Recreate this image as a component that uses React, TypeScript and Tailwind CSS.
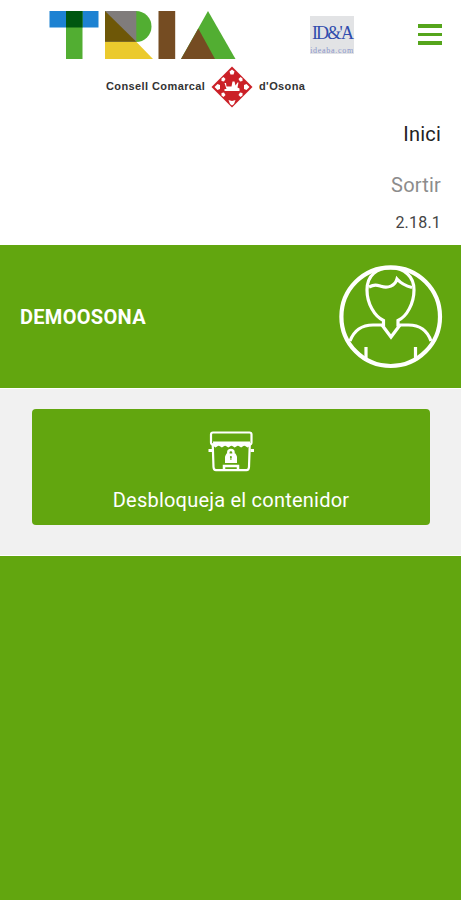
import type { ReactNode } from "react"

const navItems = [
  { label: "Inici", className: "h-[51px] text-[20px] tracking-[0.2px] text-[#222]" },
  { label: "Sortir", className: "h-[51px] text-[20px] tracking-[0.2px] text-[#8c8c8c]" },
  { label: "2.18.1", className: "h-[25px] text-[16px] tracking-[0.2px] text-[#444]" },
]

function TriaLogo() {
  return (
    <svg width="188" height="50" viewBox="48 10 188 50">
      <rect x="49.5" y="11" width="49" height="16.5" fill="#1d82d2" />
      <rect x="66" y="11" width="16.5" height="48" fill="#52ae32" />
      <rect x="66" y="11" width="16.5" height="16.5" fill="#005710" />
      <path d="M136 11a15.5 15.5 0 0 1 0 31z" fill="#52ae32" />
      <path d="M105 41.5h31L153 59h-48z" fill="#ebca2d" />
      <rect x="105" y="11" width="31.3" height="30.7" fill="#807c7b" />
      <path d="M105 11L136.3 41.7H105z" fill="#6e5707" />
      <rect x="158.5" y="11" width="16.7" height="48" fill="#754c22" />
      <path d="M208 11L235.5 59H181z" fill="#52ae32" />
      <path d="M198.3 28.5L215 59H181z" fill="#754c22" />
    </svg>
  )
}

function Shield() {
  return (
    <svg width="42" height="42" viewBox="0 0 42 42">
      <path d="M21 .5L41.5 21 21 41.5.5 21z" fill="#cb2027" />
      <g fill="#fff">
        <path d="M18.5 5.5l2.5-2 2.5 2-1 3h-3z" />
        <path d="M17.5 34l3.5 1 3.5-1-1.500 4-2 1.500-2-1.500z" />
        <path d="M3.5 21l3-3 2.500 1v4l-2.500 1z" />
        <path d="M38.5 21l-3-3-2.500 1v4l2.500 1z" />
        <path d="M10.5 12.5l2-1.500 2 2-1.500 2.500-2.500-.5z" />
        <path d="M31.5 12.5l-2-1.500-2 2 1.500 2.500 2.500-.5z" />
        <path d="M10.5 29.5l2 1.500 2-2-1.500-2.500-2.500.5z" />
        <path d="M31.5 29.5l-2 1.500-2-2 1.500-2.500 2.500.5z" />
        <path d="M13.500 17h1.500l.5 3.500h5l1-5h2l1 4 2-3h1l-1 5 2 1v2.500h-15v-2h2z" />
      </g>
    </svg>
  )
}

function Avatar() {
  return (
    <svg width="104" height="104" viewBox="339 265 104 104" fill="none" stroke="#fff" strokeWidth="3.2">
      <circle cx="390.7" cy="316.7" r="49.3" strokeWidth="4.2" />
      <path d="M350 341c4-10.500 12-16 23-16h10.500v-4.500c-9-4-16.500-17-16.500-30.500 0-15 10-22 23.500-22s23.500 8 23.500 22c0 13-7 26.500-16 30.500v4.500h10.500c11 0 19 6 22.500 16" />
      <path d="M382 325l9 12 9-12" />
      <path d="M369 287c6-3 8-2 12-.7 7 2.200 14-.3 16-7.300 4 4.500 9 7 15 8.500" />
      <path d="M366 347v14M415.500 347v14" />
    </svg>
  )
}

function ContainerIcon() {
  return (
    <svg width="46" height="42" viewBox="208 430 46 42" fill="none" stroke="#fff" strokeWidth="2.2">
      <rect x="211" y="432.5" width="40.5" height="12" rx="2" />
      <path d="M212.700 443.500l.8 23.500c.1 2 1 3.200 2.500 3.200h30.500c1.500 0 2.400-1.200 2.500-3.200l.8-23.500" />
      <path d="M208.500 450.500h4M250.500 450.500h4" strokeWidth="3" />
      <path d="M213 441.500h37v4.500l-2.500 1.500-3.200-2-3.200 2-3.200-2-3.200 2-3.200-2-3.200 2-3.200-2-3.200 2-3.200-2-3.200 2-2.200-1.500z" fill="#fff" stroke="none" />
      <path d="M224 470v-4h14v4" strokeWidth="2.500" />
      <path d="M228.300 454v-1.500c0-1.700 1-2.500 2.600-2.500s2.600.8 2.600 2.500v1.500" strokeWidth="2.500" />
      <path d="M226.500 453.500h9l1.500 3v6.500h-12v-6.500z" fill="#fff" stroke="none" />
      <circle cx="230.9" cy="457" r="1" fill="#62a60f" stroke="none" />
      <path d="M230.9 457v3" stroke="#62a60f" strokeWidth="1" />
    </svg>
  )
}

function ActionCard({ icon, label }: { icon: ReactNode; label: string }) {
  return (
    <button className="flex h-[116px] w-full flex-col items-center rounded-[4px] bg-[#62a60f] pt-[21px] text-white">
      {icon}
      <span className="mt-[13px] text-[20px] leading-[30px] tracking-[0.22px]">{label}</span>
    </button>
  )
}

export default function App() {
  return (
    <div className="flex h-[900px] w-[461px] flex-col overflow-hidden bg-[#62a60f] font-['Roboto',sans-serif]">
      <div className="h-[245px] shrink-0 bg-white">
        <header className="flex h-[108px] items-start">
          <div className="ml-[48px] w-[262px] shrink-0 pt-[10px]">
            <TriaLogo />
            <div className="mt-[6px] flex h-[42px] items-center pl-[58px] font-['Liberation_Sans',sans-serif] text-[11px] font-bold whitespace-nowrap text-[#333]">
              <span className="w-[105px] pb-[2px] tracking-[0.4px]">Consell Comarcal</span>
              <Shield />
              <span className="ml-[6px] pb-[2px] tracking-[0.4px]">d'Osona</span>
            </div>
          </div>
          <div className="mt-[16px] flex h-[38px] w-[44px] flex-col items-center bg-[#e2e3e5] whitespace-nowrap">
            <span className="mt-[6px] font-['Liberation_Serif',serif] text-[18px] leading-[22px] tracking-[-1.8px] text-[#304cad]">ID&amp;'A</span>
            <span className="mt-[2px] font-['Liberation_Serif',serif] text-[8px] leading-[9px] tracking-[0.7px] text-[#8b96cb]">ideaba.com</span>
          </div>
          <button className="mt-[24px] ml-[64px] flex flex-col gap-[5px]" aria-label="Menu">
            <span className="h-[3.5px] w-[24px] bg-[#55a51c]" />
            <span className="h-[3.5px] w-[24px] bg-[#55a51c]" />
            <span className="h-[3.5px] w-[24px] bg-[#55a51c]" />
          </button>
        </header>
        <nav className="flex flex-col pr-[20px] text-right">
          {navItems.map((item) => (
            <a key={item.label} className={`flex items-center justify-end ${item.className}`}>
              {item.label}
            </a>
          ))}
        </nav>
      </div>

      <section className="flex h-[143px] shrink-0 items-center justify-between pr-[18px] pl-[20px]">
        <h1 className="text-[20px] font-bold tracking-[0.3px] text-white">DEMOOSONA</h1>
        <Avatar />
      </section>

      <main className="h-[168px] shrink-0 border-y border-white bg-[#f1f1f1] pt-[20px] pr-[31px] pl-[32px]">
        <ActionCard icon={<ContainerIcon />} label="Desbloqueja el contenidor" />
      </main>
    </div>
  )
}
